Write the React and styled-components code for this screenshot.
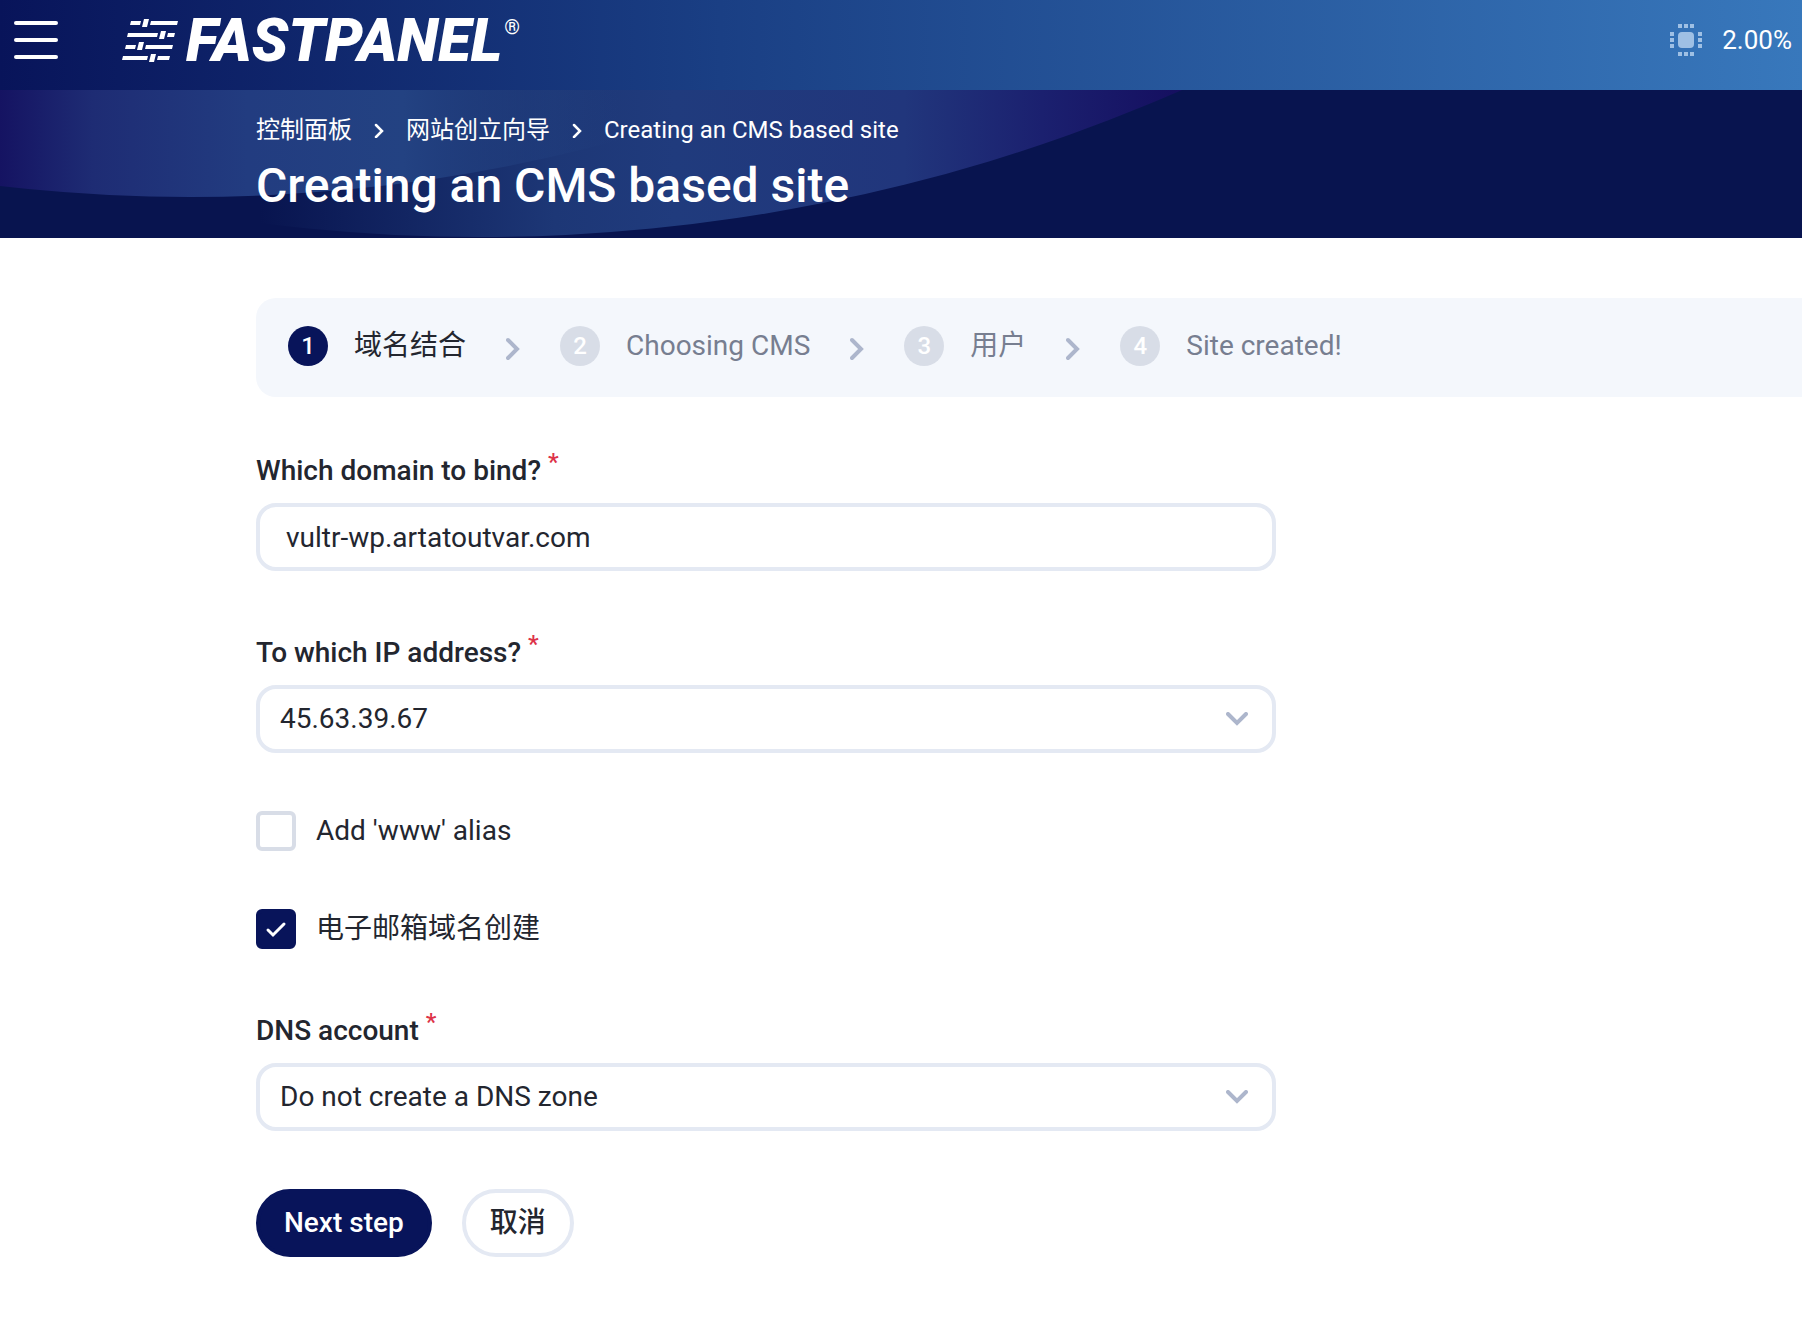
import React, { useState } from "react";
import styled, { createGlobalStyle } from "styled-components";

const GlobalStyle = createGlobalStyle`
  *, *::before, *::after {
    box-sizing: border-box;
  }

  body {
    background: #ffffff;
    color: #23262f;
    font-family: Roboto, "Noto Sans CJK SC", sans-serif;
    font-size: 28px;
    line-height: 40px;
    margin: 0;
    overflow-x: hidden;
  }

  button, input, select {
    color: inherit;
    font: inherit;
  }
`;

const TopBar = styled.header`
  align-items: center;
  background: linear-gradient(90deg, #08145a 0%, #1a3f84 40%, #3878bc 100%);
  color: #ffffff;
  display: flex;
  height: 90px;
  padding: 0 10px 10px 14px;
`;

const MenuButton = styled.button`
  background: none;
  border: 0;
  display: flex;
  flex-direction: column;
  gap: 13px;
  margin-right: 64px;
  padding: 0;
`;

const MenuLine = styled.span`
  background: #ffffff;
  border-radius: 2px;
  height: 4px;
  width: 44px;
`;

const Logo = styled.a`
  align-items: center;
  color: inherit;
  display: flex;
  text-decoration: none;
`;

const LogoName = styled.span`
  font-size: 60px;
  font-style: italic;
  font-weight: 900;
  line-height: 60px;
  margin-left: 8px;
  padding-top: 2px;
`;

const Registered = styled.sup`
  align-self: flex-start;
  font-size: 20px;
  line-height: 24px;
  margin: 6px 0 0 2px;
`;

const Load = styled.div`
  align-items: center;
  display: flex;
  font-size: 26px;
  gap: 20px;
  margin-left: auto;
`;

const Hero = styled.section`
  background: #08144f;
  color: #ffffff;
  padding: 20px 0 20px 256px;
  position: relative;
`;

const HeroArt = styled.svg`
  height: 148px;
  left: 0;
  position: absolute;
  top: 0;
  width: 1200px;
`;

const Crumbs = styled.nav`
  align-items: center;
  display: flex;
  font-size: 24px;
  gap: 22px;
  line-height: 40px;
  position: relative;
`;

const Crumb = styled.a`
  color: inherit;
  text-decoration: none;
`;

const Title = styled.h1`
  font-size: 48px;
  font-weight: 500;
  line-height: 60px;
  margin: 6px 0 2px;
  position: relative;
`;

const Content = styled.main`
  padding: 60px 0 60px 256px;
`;

const Steps = styled.ol`
  background: #f4f7fc;
  border-radius: 20px 0 0 20px;
  display: flex;
  gap: 40px;
  list-style: none;
  margin: 0 0 50px;
  padding: 28px 32px 31px;
`;

const Step = styled.li`
  align-items: center;
  color: ${props => (props.$active ? "#23262f" : "#777e90")};
  display: flex;
`;

const StepNumber = styled.span`
  background: ${props => (props.$active ? "#08145a" : "#d8dde7")};
  border-radius: 50%;
  color: #ffffff;
  font-size: 24px;
  font-weight: 500;
  height: 40px;
  margin-right: 26px;
  text-align: center;
  width: 40px;
`;

const StepArrow = styled.svg`
  height: 24px;
  margin: 6px 0 0 40px;
  width: 14px;
`;

const Form = styled.form`
  max-width: 1020px;
`;

const Field = styled.div`
  margin-bottom: 58px;
`;

const Label = styled.label`
  display: block;
  font-weight: 500;
  line-height: 48px;
  margin-bottom: 8px;
`;

const Required = styled.span`
  color: #dd3348;
  font-size: 24px;
  line-height: 24px;
  margin-left: 7px;
  vertical-align: 10px;
`;

const TextInput = styled.input`
  background: #ffffff;
  border: 4px solid #e4e9f3;
  border-radius: 20px;
  display: block;
  height: 68px;
  outline: 0;
  padding: 0 26px;
  width: 100%;
`;

const SelectBox = styled.div`
  display: grid;

  > * {
    grid-area: 1 / 1;
  }
`;

const Select = styled.select`
  appearance: none;
  background: #ffffff;
  border: 4px solid #e4e9f3;
  border-radius: 20px;
  height: 68px;
  padding: 0 60px 0 20px;
  width: 100%;
`;

const SelectArrow = styled.svg`
  align-self: center;
  height: 14px;
  justify-self: end;
  margin-right: 28px;
  pointer-events: none;
  width: 22px;
`;

const CheckRow = styled.label`
  align-items: center;
  display: flex;
  gap: 20px;
  margin-bottom: 58px;
`;

const CheckBox = styled.span`
  display: grid;

  > * {
    grid-area: 1 / 1;
  }
`;

const CheckInput = styled.input`
  appearance: none;
  border: 4px solid #d8dde7;
  border-radius: 6px;
  height: 40px;
  margin: 0;
  width: 40px;

  &:checked {
    background: #08145a;
    border-color: #08145a;
  }
`;

const CheckMark = styled.svg`
  height: 40px;
  pointer-events: none;
  width: 40px;
`;

const Actions = styled.div`
  display: flex;
  gap: 30px;
`;

const Button = styled.button`
  background: ${props => (props.$primary ? "#08145a" : "#ffffff")};
  border: 4px solid ${props => (props.$primary ? "#08145a" : "#e4e9f3")};
  border-radius: 34px;
  color: ${props => (props.$primary ? "#ffffff" : "#23262f")};
  font-weight: 500;
  height: 68px;
  padding: 0 24px;
`;

const LogoMark = () => (
  <svg width="56" height="50" viewBox="0 0 56 50" fill="#fff">
    <path d="M9 6H19L18 10H8zM29 6H56L55 10H28zM22 4H27L25 12H20z" />
    <path d="M6 18H36L35 22H5zM46 18H53L52 22H45zM39 16H44L42 24H37z" />
    <path d="M4 30H14L13 34H3zM24 30H51L50 34H23zM17 27H22L20 35H15z" />
    <path d="M1 41H26L25 45H0zM36 41H48L47 45H35zM29 39H34L32 47H27z" />
  </svg>
);

const ChipIcon = () => (
  <svg width="32" height="32" viewBox="0 0 32 32" fill="#9fc0e4">
    <rect x="8" y="8" width="16" height="16" rx="4" />
    {[8, 14, 20].map(n => (
      <path
        key={n}
        d={`M${n} 0h4v4h-4zM${n} 28h4v4h-4zM0 ${n}h4v4h-4zM28 ${n}h4v4h-4z`}
      />
    ))}
  </svg>
);

const CrumbArrow = () => (
  <svg width="10" height="16" viewBox="0 0 10 16" fill="none">
    <path
      d="M2 3L8 9L2 15"
      stroke="#fff"
      strokeWidth="2.5"
      strokeLinecap="round"
    />
  </svg>
);

const HeroBackground = () => (
  <HeroArt viewBox="0 0 1200 148" aria-hidden="true">
    <defs>
      <linearGradient id="near" gradientUnits="userSpaceOnUse" x1="0" x2="620">
        <stop offset="0" stopColor="#151362" />
        <stop offset="0.15" stopColor="#1e2c74" />
        <stop offset="0.4" stopColor="#223c80" />
        <stop offset="0.65" stopColor="#234282" />
        <stop offset="1" stopColor="#234282" stopOpacity="0" />
      </linearGradient>
      <linearGradient id="far" gradientUnits="userSpaceOnUse" x1="260" x2="1180">
        <stop offset="0" stopColor="#08144f" />
        <stop offset="0.32" stopColor="#1d3776" />
        <stop offset="0.45" stopColor="#203b7d" />
        <stop offset="0.7" stopColor="#21367c" />
        <stop offset="0.85" stopColor="#1b206f" />
        <stop offset="1" stopColor="#150f60" />
      </linearGradient>
    </defs>
    <circle cx="480" cy="-1603" r="1750" fill="url(#far)" />
    <circle cx="190" cy="-1543" r="1650" fill="url(#near)" />
  </HeroArt>
);

const SelectField = ({ id, label, options }) => (
  <Field>
    <Label htmlFor={id}>
      {label}
      <Required>*</Required>
    </Label>
    <SelectBox>
      <Select id={id}>
        {options.map(option => (
          <option key={option}>{option}</option>
        ))}
      </Select>
      <SelectArrow viewBox="0 0 22 14" fill="none">
        <path
          d="M2 2L11 11L20 2"
          stroke="#adb6cc"
          strokeWidth="4"
          strokeLinecap="round"
        />
      </SelectArrow>
    </SelectBox>
  </Field>
);

const Check = ({ label, initial }) => {
  const [checked, setChecked] = useState(initial);

  return (
    <CheckRow>
      <CheckBox>
        <CheckInput
          type="checkbox"
          checked={checked}
          onChange={() => setChecked(!checked)}
        />
        {checked ? (
          <CheckMark viewBox="0 0 40 40" fill="none">
            <path
              d="M12 21L17 26L28 15"
              stroke="#fff"
              strokeWidth="3"
              strokeLinecap="round"
            />
          </CheckMark>
        ) : null}
      </CheckBox>
      {label}
    </CheckRow>
  );
};

const steps = ["域名结合", "Choosing CMS", "用户", "Site created!"];

const App = () => {
  const [domain, setDomain] = useState("vultr-wp.artatoutvar.com");

  return (
    <>
      <GlobalStyle />
      <TopBar>
        <MenuButton type="button" aria-label="Menu">
          <MenuLine />
          <MenuLine />
          <MenuLine />
        </MenuButton>
        <Logo href="#">
          <LogoMark />
          <LogoName>FASTPANEL</LogoName>
          <Registered>®</Registered>
        </Logo>
        <Load>
          <ChipIcon />
          2.00%
        </Load>
      </TopBar>
      <Hero>
        <HeroBackground />
        <Crumbs>
          <Crumb href="#">控制面板</Crumb>
          <CrumbArrow />
          <Crumb href="#">网站创立向导</Crumb>
          <CrumbArrow />
          <span>Creating an CMS based site</span>
        </Crumbs>
        <Title>Creating an CMS based site</Title>
      </Hero>
      <Content>
        <Steps>
          {steps.map((step, index) => (
            <Step key={step} $active={index === 0}>
              <StepNumber $active={index === 0}>{index + 1}</StepNumber>
              {step}
              {index < steps.length - 1 ? (
                <StepArrow viewBox="0 0 14 24" fill="none">
                  <path
                    d="M2 3L11 12L2 21"
                    stroke="#adb6cc"
                    strokeWidth="4"
                    strokeLinecap="round"
                  />
                </StepArrow>
              ) : null}
            </Step>
          ))}
        </Steps>
        <Form onSubmit={event => event.preventDefault()}>
          <Field>
            <Label htmlFor="domain">
              Which domain to bind?
              <Required>*</Required>
            </Label>
            <TextInput
              id="domain"
              type="text"
              value={domain}
              onChange={event => setDomain(event.target.value)}
            />
          </Field>
          <SelectField
            id="ip"
            label="To which IP address?"
            options={["45.63.39.67"]}
          />
          <Check label="Add 'www' alias" initial={false} />
          <Check label="电子邮箱域名创建" initial={true} />
          <SelectField
            id="dns"
            label="DNS account"
            options={["Do not create a DNS zone"]}
          />
          <Actions>
            <Button type="submit" $primary>
              Next step
            </Button>
            <Button type="button">取消</Button>
          </Actions>
        </Form>
      </Content>
    </>
  );
};

export default App;
